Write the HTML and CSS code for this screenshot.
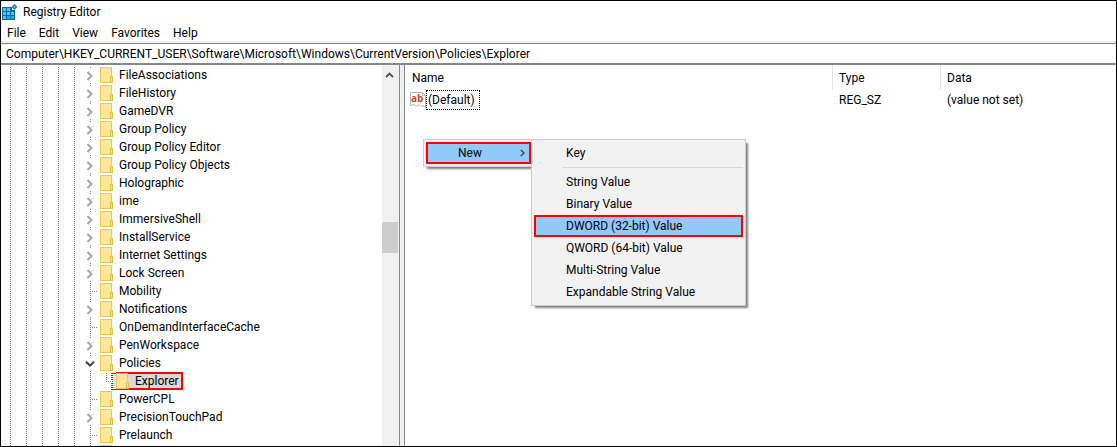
FILE: index.html
```
<!DOCTYPE html>
<html lang="en">
<head>
  <meta charset="UTF-8" />
  <meta name="viewport" content="width=device-width, initial-scale=1" />
  <title>Registry Editor</title>
  <link rel="stylesheet" href="styles.css">
</head>
<body>

  <!-- Shared icons -->
  <svg class="sprite" aria-hidden="true">
    <symbol id="folder" viewBox="0 0 13 16">
      <rect x="0.5" y="0.5" width="11" height="15" fill="#ffe699" stroke="#ecc64f" />
      <rect x="10.5" y="9.5" width="2" height="6" fill="#ffe08a" stroke="#e5bd3f" />
    </symbol>
    <symbol id="closed" viewBox="0 0 7 10">
      <path d="M1 1 L5 5 L1 9" fill="none" stroke="#a6a6a6" stroke-width="2" />
    </symbol>
    <symbol id="open" viewBox="0 0 10 7">
      <path d="M1 1.2 L5 5.2 L9 1.2" fill="none" stroke="#404040" stroke-width="2" />
    </symbol>
  </svg>

  <div class="window">
    <header class="title-bar">
      <svg class="app-icon" viewBox="0 0 16 16" aria-hidden="true">
        <path d="M0 3h10v3h3v10H0z" fill="#0b6fa4" />
        <path d="M1 4h3v3H1zM5 4h3v3H5zM1 8h3v3H1zM5 8h3v3H5zM9 8h3v3H9zM1 12h3v3H1z" fill="#4fc3f7" />
        <path d="M5 12h3v3H5zM9 12h3v3H9z" fill="#29a9e0" />
        <path d="M12.500 0L15.500 3L12.500 6L9.500 3z" fill="#1583bd" />
        <path d="M12.500 2L13.500 3L12.500 4L11.500 3z" fill="#7fd8ff" />
      </svg>
      <h1>Registry Editor</h1>
    </header>

    <nav class="menu-bar">
      <button type="button">File</button>
      <button type="button">Edit</button>
      <button type="button">View</button>
      <button type="button">Favorites</button>
      <button type="button">Help</button>
    </nav>

    <input class="address" type="text" aria-label="Address" value="Computer\HKEY_CURRENT_USER\Software\Microsoft\Windows\CurrentVersion\Policies\Explorer" />

    <main class="panes">
      <div class="tree-pane">
        <ul class="tree" id="tree"></ul>
        <div class="scrollbar">
          <svg class="scroll-up" viewBox="0 0 9 6" aria-hidden="true">
            <path d="M1 5 L4.500 1.500 L8 5" fill="none" stroke="#505050" stroke-width="1.8" />
          </svg>
          <div class="thumb"></div>
        </div>
      </div>

      <div class="splitter"></div>

      <div class="list-pane">
        <table class="values">
          <thead>
            <tr>
              <th class="col-name">Name</th>
              <th class="col-type">Type</th>
              <th>Data</th>
            </tr>
          </thead>
          <tbody>
            <tr>
              <td class="name-cell">
                <div class="value-name">
                  <svg class="value-icon" viewBox="0 0 16 16" aria-hidden="true">
                    <path d="M0.500 0.500H12.500L15.500 3.500V15.500L13 13.500L11 14.500L9 12.500L6.500 14.500L4 12.500L0.500 13.500z" fill="#fff" stroke="#b4b4b4" />
                    <path d="M12.500 0.500V3.500H15.500" fill="none" stroke="#b4b4b4" />
                    <text x="1" y="10">ab</text>
                  </svg>
                  <span class="focused">(Default)</span>
                </div>
              </td>
              <td>REG_SZ</td>
              <td>(value not set)</td>
            </tr>
          </tbody>
        </table>

        <!-- Context menu -->
        <div class="menu context-menu">
          <button type="button" class="marked">New
            <svg class="arrow" viewBox="0 0 5 8" aria-hidden="true">
              <path d="M0.800 0.800 L4 4 L0.800 7.200" fill="none" stroke="#333" stroke-width="1.2" />
            </svg>
          </button>
          <div class="menu submenu">
            <button type="button">Key</button>
            <hr />
            <button type="button">String Value</button>
            <button type="button">Binary Value</button>
            <button type="button" class="marked">DWORD (32-bit) Value</button>
            <button type="button">QWORD (64-bit) Value</button>
            <button type="button">Multi-String Value</button>
            <button type="button">Expandable String Value</button>
          </div>
        </div>
      </div>
    </main>
  </div>

  <script src="script.js"></script>
</body>
</html>
```
FILE: styles.css
```
* {
  box-sizing: border-box;
}

body {
  margin: 0;
  font-family: 'Segoe UI', Roboto, sans-serif;
  font-size: 12px;
  line-height: 18px;
  color: #000;
}

button,
input {
  font: inherit;
  color: inherit;
  border: none;
  background: none;
}

.sprite {
  display: none;
}

.window {
  display: flex;
  flex-direction: column;
  height: 100vh;
  border: 1px solid #000;
  background: #fff;
  overflow: hidden;
}

/* Title and menu */
.title-bar {
  display: flex;
  align-items: center;
  gap: 5px;
  height: 22px;
  padding: 0 1px;
}

.title-bar h1 {
  margin: 0;
  font-size: 12px;
  font-weight: 400;
}

.app-icon {
  width: 16px;
  height: 16px;
}

.menu-bar {
  display: flex;
  height: 20px;
  padding-top: 1px;
  border-bottom: 2px solid #f0f0f0;
}

.menu-bar button {
  padding: 0 7px 0 6px;
}

.address {
  width: 100%;
  height: 22px;
  padding: 0 5px;
  border-top: 1px solid #828282;
  border-bottom: 2px solid #828790;
}

/* Panes */
.panes {
  display: flex;
  flex: 1;
  min-height: 0;
}

.tree-pane {
  display: flex;
  width: 398px;
  overflow: hidden;
}

.tree {
  flex: 1;
  margin: 0;
  padding: 1px 0 0;
  list-style: none;
}

.tree li {
  display: flex;
  height: 18px;
}

/* dotted lines: white stripes over a 16px column grid */
.guides,
.branch {
  background:
    linear-gradient(#fff 1px, transparent 1px) 0 0 / 100% 2px,
    linear-gradient(90deg, #808080 1px, transparent 1px) 9px 0 / 16px 100%;
}

.guides {
  width: 81px;
}

.guides.deep {
  width: 97px;
}

.branch {
  position: relative;
  width: 18px;
  background-position: 0 0, 8px 0;
  background-size: 100% 2px, 18px 100%;
}

.branch.last {
  background-size: 100% 2px, 18px 10px;
  background-repeat: repeat, no-repeat;
}

.branch.leaf::after {
  content: '';
  position: absolute;
  top: 9px;
  left: 8px;
  width: 8px;
  height: 1px;
  background: repeating-linear-gradient(90deg, #808080 0 1px, #fff 1px 2px);
}

.branch svg {
  display: block;
  width: 14px;
  height: 14px;
  margin: 3px 0 0 1px;
  padding: 2px 3px;
  background: #fff;
}

.branch svg.opened {
  padding: 3px 2px;
}

.node {
  display: flex;
  align-items: center;
  gap: 6px;
}

.node svg {
  width: 13px;
  height: 16px;
}

.node.selected {
  margin-left: -5px;
  padding: 0 2px 0 3px;
  border: 2px solid #f00;
  background: #d9d9d9;
}

.scrollbar {
  width: 17px;
  padding-right: 1px;
  background: #f0f0f0;
}

.scroll-up {
  display: block;
  width: 9px;
  height: 6px;
  margin: 7px auto 0 3px;
}

.thumb {
  height: 31px;
  margin-top: 144px;
  background: #cdcdcd;
}

.splitter {
  width: 6px;
  border: solid #828790;
  border-width: 0 1px;
  background: #f0f0f0;
}

.list-pane {
  position: relative;
  flex: 1;
}

/* Values */
.values {
  width: 100%;
  border-collapse: separate;
  border-spacing: 0;
  table-layout: fixed;
}

.values th,
.values td {
  padding: 0 6px;
  text-align: left;
  font-weight: 400;
}

.values th {
  height: 25px;
  border-right: 1px solid #e5e5e5;
}

.values th:first-child {
  padding-left: 7px;
}

.values th:last-child {
  border-right: none;
}

.values td {
  height: 20px;
}

.values .name-cell {
  padding-left: 5px;
}

.col-name {
  width: 428px;
}

.col-type {
  width: 108px;
}

.value-name {
  display: flex;
  align-items: center;
}

.value-icon {
  width: 16px;
  height: 16px;
}

.value-icon text {
  font: bold 10px 'Open Sans', sans-serif;
  fill: #d24726;
}

.focused {
  padding: 0 4px 0 1px;
  border: 1px dotted #000;
}

/* Menus */
.menu {
  position: absolute;
  padding: 2px;
  border: 1px solid #ccc;
  background: #f2f2f2;
  box-shadow: 3px 3px 2px -1px rgba(0, 0, 0, 0.5);
}

.menu button {
  display: flex;
  align-items: center;
  justify-content: space-between;
  width: 100%;
  height: 22px;
  padding: 0 4px 0 32px;
}

.menu button.marked {
  padding: 0 4px 0 30px;
  border: 2px solid #f00;
  background: #91c9f7;
}

.menu hr {
  height: 1px;
  margin: 3px 0 3px 28px;
  border: none;
  background: #d7d7d7;
}

.context-menu {
  top: 74px;
  left: 18px;
  width: 111px;
}

.submenu {
  top: -1px;
  left: 107px;
  width: 215px;
}

.arrow {
  width: 5px;
  height: 8px;
}
```
FILE: script.js
```
const tree = document.getElementById('tree');

const keys = [
  { name: 'FileAssociations', children: true },
  { name: 'FileHistory', children: true },
  { name: 'GameDVR', children: true },
  { name: 'Group Policy', children: true },
  { name: 'Group Policy Editor', children: true },
  { name: 'Group Policy Objects', children: true },
  { name: 'Holographic', children: true },
  { name: 'ime', children: true },
  { name: 'ImmersiveShell', children: true },
  { name: 'InstallService', children: true },
  { name: 'Internet Settings', children: true },
  { name: 'Lock Screen', children: true },
  { name: 'Mobility' },
  { name: 'Notifications', children: true },
  { name: 'OnDemandInterfaceCache' },
  { name: 'PenWorkspace', children: true },
  { name: 'Policies', children: true, open: true },
  { name: 'Explorer', deep: true },
  { name: 'PowerCPL' },
  { name: 'PrecisionTouchPad', children: true },
  { name: 'Prelaunch' },
  { name: '' }
];

function toggleIcon(key) {
  if (!key.children) return '';
  return key.open
    ? '<svg class="opened"><use href="#open"></use></svg>'
    : '<svg><use href="#closed"></use></svg>';
}

keys.forEach((key) => {
  const li = document.createElement('li');
  li.innerHTML = `
    <span class="guides ${key.deep ? 'deep' : ''}"></span>
    <span class="branch ${key.children ? '' : 'leaf'} ${key.deep ? 'last' : ''}">${toggleIcon(key)}</span>
    <span class="node ${key.deep ? 'selected' : ''}">
      <svg><use href="#folder"></use></svg>
      <span>${key.name}</span>
    </span>`;
  tree.appendChild(li);
});
```
